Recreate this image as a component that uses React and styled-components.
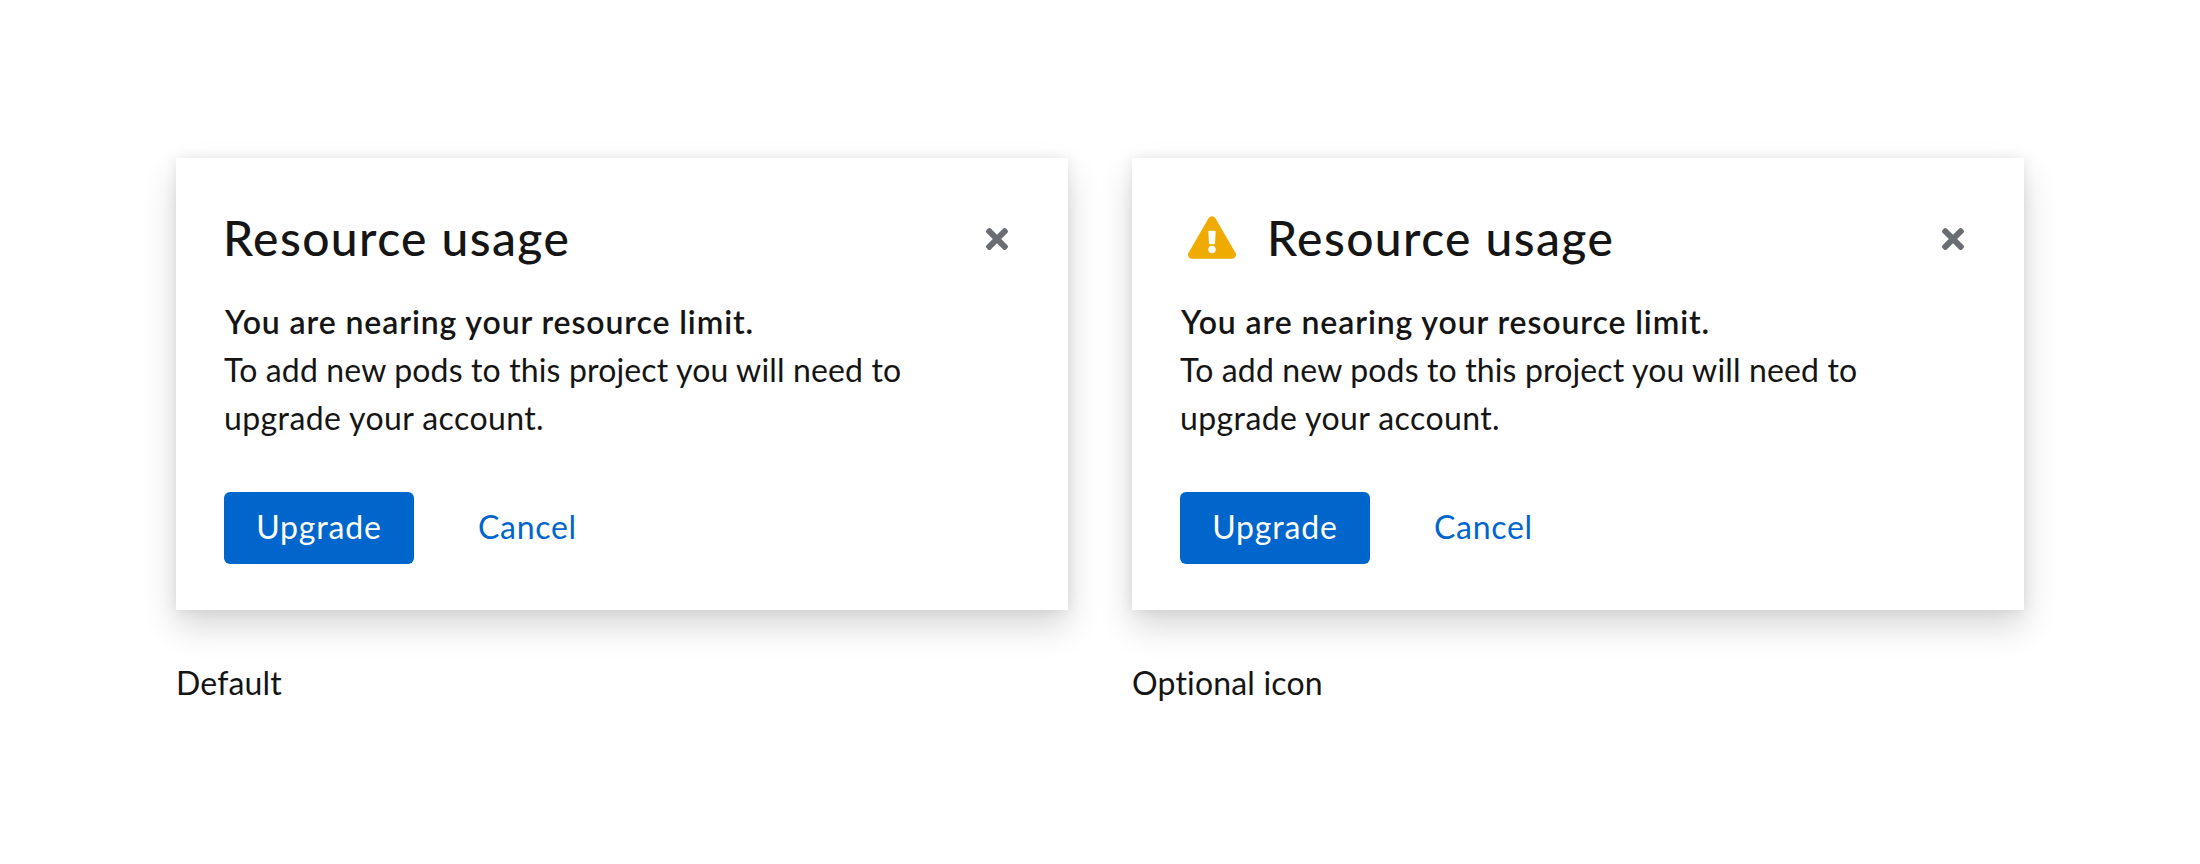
import React from "react";
import styled, { createGlobalStyle } from "styled-components";
import { FaExclamationTriangle, FaTimes } from "react-icons/fa";

const GlobalStyle = createGlobalStyle`
  *, *::before, *::after { box-sizing: border-box; }
  body {
    margin: 0;
    background: #fff;
    color: #151515;
    font-family: Lato, "Open Sans", sans-serif;
    font-size: 32px;
    line-height: 48px;
  }
`;

const Page = styled.main`
  display: flex;
  gap: 64px;
  min-height: 864px;
  padding: 158px 176px 0;
`;

const Example = styled.figure`
  width: 892px;
  margin: 0;
`;

const Card = styled.section`
  display: flex;
  flex-direction: column;
  height: 452px;
  padding: 48px 55px 46px 48px;
  background: #fff;
  box-shadow: 0 16px 32px rgba(3, 3, 3, 0.16), 0 0 12px rgba(3, 3, 3, 0.08);
`;

const Header = styled.header`
  display: flex;
  align-items: flex-start;
  height: 62px;
`;

const WarningIcon = styled(FaExclamationTriangle)`
  width: 48px;
  height: 43px;
  margin: 10px 32px 0 8px;
  color: #f0ab00;
`;

const Title = styled.h2`
  flex: 1;
  margin: 1px 0 0 -1px;
  font-size: 48px;
  font-weight: 500;
  line-height: 62px;
  letter-spacing: 1.4px;
`;

const CloseButton = styled.button`
  display: flex;
  margin: 17px 0 0;
  padding: 0;
  border: 0;
  background: none;
  color: #6a6e73;
  font-size: 32px;
`;

const Body = styled.div`
  margin-top: 30px;
`;

const Line = styled.span`
  display: block;
  white-space: nowrap;
  letter-spacing: ${(p) => p.$tracking}px;
`;

const Lead = styled(Line).attrs({ as: "strong" })`
  margin-left: 1px;
  font-weight: 600;
`;

const Actions = styled.footer`
  display: flex;
  margin-top: auto;
`;

const Button = styled.button`
  height: 72px;
  padding: 11px 32px 13px;
  border: 0;
  border-radius: 6px;
  background: none;
  color: #06c;
  font: inherit;
  letter-spacing: 0.7px;
`;

const PrimaryButton = styled(Button)`
  width: 190px;
  margin-right: 32px;
  background: #06c;
  color: #fff;
  letter-spacing: 0.85px;
`;

const Caption = styled.figcaption`
  margin-top: 49px;
  letter-spacing: 0.18px;
`;

function ResourceCard({ caption, withIcon }) {
  return (
    <Example>
      <Card>
        <Header>
          {withIcon && <WarningIcon aria-hidden="true" />}
          <Title>Resource usage</Title>
          <CloseButton aria-label="Close">
            <FaTimes />
          </CloseButton>
        </Header>
        <Body>
          <Lead $tracking={0.9}>You are nearing your resource limit.</Lead>
          <Line $tracking={0.15}>To add new pods to this project you will need to</Line>
          <Line $tracking={0.4}>upgrade your account.</Line>
        </Body>
        <Actions>
          <PrimaryButton>Upgrade</PrimaryButton>
          <Button>Cancel</Button>
        </Actions>
      </Card>
      <Caption>{caption}</Caption>
    </Example>
  );
}

export default function App() {
  return (
    <>
      <GlobalStyle />
      <Page>
        <ResourceCard caption="Default" />
        <ResourceCard caption="Optional icon" withIcon />
      </Page>
    </>
  );
}
